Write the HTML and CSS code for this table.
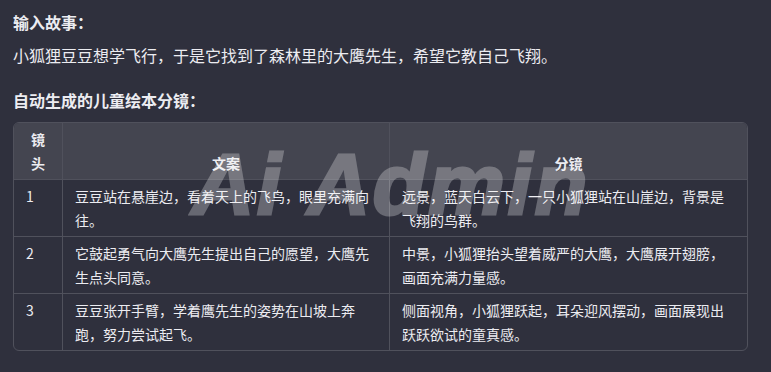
FILE: index.html
```html
<!DOCTYPE html>
<html lang="zh-CN">
<head>
<meta charset="utf-8">
<link rel="stylesheet" href="styles.css">
</head>
<body>
<div class="page">
  <h3 class="title">输入故事：</h3>
  <p class="story">小狐狸豆豆想学飞行，于是它找到了森林里的大鹰先生，希望它教自己飞翔。</p>
  <h3 class="title">自动生成的儿童绘本分镜：</h3>
  <div class="table-wrap">
    <table class="board">
      <thead>
        <tr>
          <th class="c1">镜头</th>
          <th class="c2">文案</th>
          <th class="c3">分镜</th>
        </tr>
      </thead>
      <tbody>
        <tr>
          <td>1</td>
          <td>豆豆站在悬崖边，看着天上的飞鸟，眼里充满向往。</td>
          <td>远景，蓝天白云下，一只小狐狸站在山崖边，背景是飞翔的鸟群。</td>
        </tr>
        <tr>
          <td>2</td>
          <td>它鼓起勇气向大鹰先生提出自己的愿望，大鹰先生点头同意。</td>
          <td>中景，小狐狸抬头望着威严的大鹰，大鹰展开翅膀，画面充满力量感。</td>
        </tr>
        <tr>
          <td>3</td>
          <td>豆豆张开手臂，学着鹰先生的姿势在山坡上奔跑，努力尝试起飞。</td>
          <td>侧面视角，小狐狸跃起，耳朵迎风摆动，画面展现出跃跃欲试的童真感。</td>
        </tr>
      </tbody>
    </table>
  </div>
</div>
<div class="watermark">Ai Admin</div>
</body>
</html>
```
FILE: styles.css
```css
html, body {
  margin: 0;
  padding: 0;
  background: #2f303d;
}
body {
  position: relative;
  width: 771px;
  height: 372px;
  overflow: hidden;
  color: #ececf1;
  font-family: "Noto Sans CJK SC", "Liberation Sans", sans-serif;
}
.page {
  padding: 10px 23px 0 13px;
}
.title {
  margin: 0;
  font-size: 16px;
  line-height: 24px;
  font-weight: 700;
}
.story {
  margin: 9px 0 21px;
  font-size: 16px;
  line-height: 24px;
}
.table-wrap {
  margin-top: 10px;
  border: 1px solid #50515c;
  border-radius: 6px;
  overflow: hidden;
}
.board {
  width: 100%;
  table-layout: fixed;
  border-collapse: separate;
  border-spacing: 0;
  font-size: 14px;
  line-height: 24px;
}
.board th, .board td {
  box-sizing: border-box;
  padding: 4px 12px;
  border-right: 1px solid #50515c;
  border-bottom: 1px solid #50515c;
}
.board th:last-child, .board td:last-child {
  border-right: none;
}
.board tbody tr:last-child td {
  border-bottom: none;
}
.board th {
  background: #444550;
  font-weight: 700;
  text-align: center;
  vertical-align: bottom;
}
.board td {
  vertical-align: top;
  text-align: left;
}
.c1 { width: 49px; }
.c2 { width: 327px; }
.c3 { width: auto; }
.watermark {
  position: absolute;
  left: 192px;
  top: 141px;
  font-family: "Liberation Sans", sans-serif;
  font-size: 86px;
  line-height: 86px;
  font-weight: 700;
  font-style: italic;
  color: #ffffff;
  -webkit-text-stroke: 3px #ffffff;
  letter-spacing: 3px;
  opacity: 0.27;
  white-space: nowrap;
  pointer-events: none;
}
```
